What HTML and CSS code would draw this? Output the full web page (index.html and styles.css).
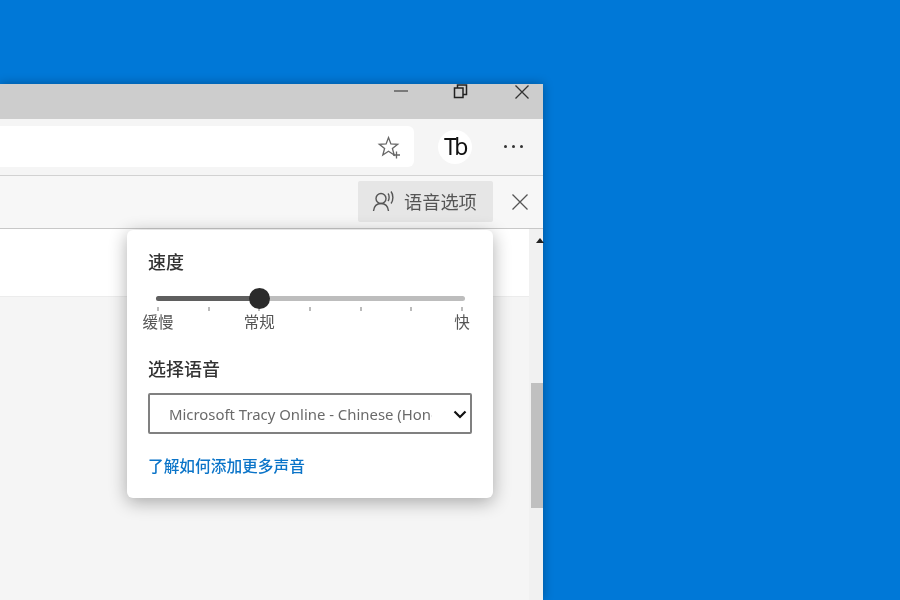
FILE: index.html
```html
<!DOCTYPE html>
<html lang="zh-CN">
<head>
    <meta charset="UTF-8">
    <meta name="viewport" content="width=device-width, initial-scale=1.0">
    <title>语音选项</title>
    <link rel="stylesheet" href="styles.css">
</head>
<body>
    <div class="window">
        <div class="titlebar">
            <svg class="win-min" width="16" height="16" viewBox="0 0 16 16"><path d="M1 8h14" stroke="#444" stroke-width="1.200" fill="none"/></svg>
            <svg class="win-restore" width="16" height="16" viewBox="0 0 16 16"><path d="M1.500 5h8.500v9.500h-8.500zM4.500 5v-3h9v9.500h-3.500" stroke="#222" stroke-width="1.500" fill="none"/></svg>
            <svg class="win-close" width="16" height="16" viewBox="0 0 16 16"><path d="M1.500 1.500l13 13M14.500 1.500l-13 13" stroke="#333" stroke-width="1.300" fill="none"/></svg>
        </div>

        <div class="toolbar">
            <div class="address">
                <svg width="24" height="24" viewBox="0 0 24 24"><path d="M11.500 2.500l2.400 6.400 6.800.4-5.300 4.200 1.800 6.600-5.700-3.800-5.700 3.800 1.800-6.600-5.300-4.200 6.800-.4z" stroke="#666" stroke-width="1.300" fill="none"/><path d="M16 20h7M19.500 16.500v7" stroke="#666" stroke-width="1.300" fill="none"/></svg>
            </div>
            <div class="avatar">Tb</div>
            <div class="more"><i></i><i></i><i></i></div>
        </div>

        <div class="readbar">
            <button class="voice-btn">
                <svg width="24" height="24" viewBox="0 0 24 24"><circle cx="9" cy="9.500" r="5" stroke="#555" stroke-width="1.400" fill="none"/><path d="M1.500 22c.5-4.500 3-7.500 7.500-7.500s7 3 7.500 7.500" stroke="#555" stroke-width="1.400" fill="none"/><path d="M16 4.500c1.500 1.500 1.500 6 0 7.500M19 2.500c2.500 3 2.500 9 0 12" stroke="#555" stroke-width="1.400" fill="none"/></svg>
                语音选项
            </button>
            <svg class="bar-close" width="18" height="18" viewBox="0 0 18 18"><path d="M1.500 1.500l15 15M16.500 1.500l-15 15" stroke="#555" stroke-width="1.300" fill="none"/></svg>
        </div>

        <div class="page">
            <div class="content">
                <div class="content-top"></div>
            </div>
            <div class="scrollbar">
                <div class="arrow"></div>
                <div class="thumb"></div>
            </div>
        </div>

        <div class="popup">
            <h3>速度</h3>
            <div class="slider">
                <div class="track"><div class="track-done"></div></div>
                <div class="knob"></div>
            </div>
            <div class="scale ticks">
                <i></i><i></i><i></i><i></i><i></i><i></i><i></i>
            </div>
            <div class="scale labels">
                <span class="col1">缓慢</span>
                <span class="col3">常规</span>
                <span class="col7">快</span>
            </div>
            <h3 class="voice-title">选择语音</h3>
            <div class="select-wrap">
                <select class="voice-select">
                    <option>Microsoft Tracy Online - Chinese (Hong Kong)</option>
                </select>
                <svg class="chevron" width="14" height="9" viewBox="0 0 14 9"><path d="M1.500 1.500l5.500 5.500 5.500-5.500" stroke="#111" stroke-width="2.200" fill="none"/></svg>
            </div>
            <a class="more-link" href="#">了解如何添加更多声音</a>
        </div>
    </div>
</body>
</html>
```

FILE: styles.css
```css
* {
    box-sizing: border-box;
}
body {
    margin: 0;
    height: 600px;
    overflow: hidden;
    background-color: #0078d7;
    font-family: "Noto Sans", "Noto Sans CJK SC", sans-serif;
}
.window {
    position: relative;
    width: 543px;
    height: 516px;
    margin-top: 84px;
    display: flex;
    flex-direction: column;
    background: #f5f5f5;
    box-shadow: 0 0 10px rgba(0, 0, 0, 0.3);
    filter: blur(0.45px);
}
.titlebar {
    height: 35px;
    background: #cdcdcd;
    position: relative;
    overflow: hidden;
}
.titlebar svg {
    position: absolute;
    top: -1px;
}
.win-min { left: 393px; }
.win-restore { left: 453px; }
.titlebar .win-close {
    left: 514px;
    top: 0;
}

.toolbar {
    height: 57px;
    padding: 7px 0 8px;
    display: flex;
    align-items: center;
    background: #f5f5f5;
    border-bottom: 1px solid #d2d2d2;
}
.address {
    width: 414px;
    height: 41px;
    padding-right: 13px;
    display: flex;
    align-items: center;
    justify-content: flex-end;
    background: white;
    border-radius: 0 6px 6px 0;
}
.avatar {
    width: 34px;
    height: 34px;
    margin-left: 24px;
    border-radius: 50%;
    background: white;
    color: #111;
    font-size: 23px;
    line-height: 33px;
    letter-spacing: -2.500px;
    text-align: center;
}
.more {
    display: flex;
    gap: 5px;
    margin-left: 32px;
}
.more i {
    width: 3px;
    height: 3px;
    border-radius: 50%;
    background: #333;
}

.readbar {
    height: 53px;
    padding: 5px 14px 6px 0;
    display: flex;
    align-items: center;
    justify-content: flex-end;
    gap: 18px;
    background: #f7f7f7;
    border-bottom: 1px solid #c8c8c8;
}
.voice-btn {
    width: 135px;
    height: 41px;
    padding: 0 0 2px 14px;
    display: flex;
    align-items: center;
    gap: 8px;
    border: none;
    border-radius: 2px;
    background: #e6e6e6;
    color: #555;
    font-family: inherit;
    font-size: 18.200px;
}

.page {
    flex: 1;
    display: flex;
    background: #f5f5f5;
}
.content {
    flex: 1;
}
.content-top {
    height: 68px;
    background: white;
    border-bottom: 1px solid #ececec;
}
.scrollbar {
    width: 14px;
    padding-top: 9px;
    background: #f1f1f1;
}
.arrow {
    width: 0;
    margin-left: 7px;
    border-left: 4px solid transparent;
    border-right: 4px solid transparent;
    border-bottom: 5px solid #222;
}
.thumb {
    height: 125px;
    margin: 140px 0 0 2px;
    background: #c0c0c0;
}

.popup {
    position: absolute;
    left: 127px;
    top: 146px;
    width: 366px;
    height: 268px;
    padding: 20px 21px;
    background: white;
    border-radius: 6px;
    box-shadow: 0 4px 18px rgba(0, 0, 0, 0.32);
}
.popup h3 {
    margin: 0;
    height: 25px;
    color: #333;
    font-size: 18px;
    font-weight: 500;
    line-height: 25px;
}
.slider {
    position: relative;
    margin: 13px 7px 0 8px;
    height: 21px;
    display: flex;
    align-items: center;
}
.track {
    width: 100%;
    height: 5px;
    border-radius: 3px;
    background: #bdbdbd;
}
.track-done {
    width: 103px;
    height: 5px;
    border-radius: 3px 0 0 3px;
    background: #5f5f5f;
}
.knob {
    position: absolute;
    left: 93px;
    top: 0;
    width: 21px;
    height: 21px;
    border-radius: 50%;
    background: #2b2b2b;
}
.scale {
    display: grid;
    grid-template-columns: repeat(7, 50.670px);
    margin-left: -15.330px;
    justify-items: center;
}
.ticks {
    margin-top: -2px;
    height: 6px;
}
.ticks i {
    width: 2px;
    height: 4px;
    background: #bbb;
}
.labels {
    height: 22px;
    margin-top: -2px;
    color: #555;
    font-size: 15.500px;
    line-height: 22px;
}
.col1 { grid-column: 1; }
.col3 { grid-column: 3; }
.col7 { grid-column: 7; }
.popup .voice-title {
    margin-top: 24px;
}
.select-wrap {
    position: relative;
    margin-top: 11px;
}
.voice-select {
    display: block;
    width: 324px;
    height: 41px;
    padding: 0 38px 0 19px;
    border: 2px solid #808080;
    border-radius: 2px;
    background-color: white;
    color: #6a6a6a;
    font-family: "Noto Sans", sans-serif;
    font-size: 14.900px;
    appearance: none;
}
.chevron {
    position: absolute;
    right: 5px;
    top: 17px;
}
.more-link {
    display: block;
    margin-top: 21px;
    color: #0b74c8;
    font-size: 15.700px;
    font-weight: 500;
    line-height: 22px;
    text-decoration: none;
}
```
